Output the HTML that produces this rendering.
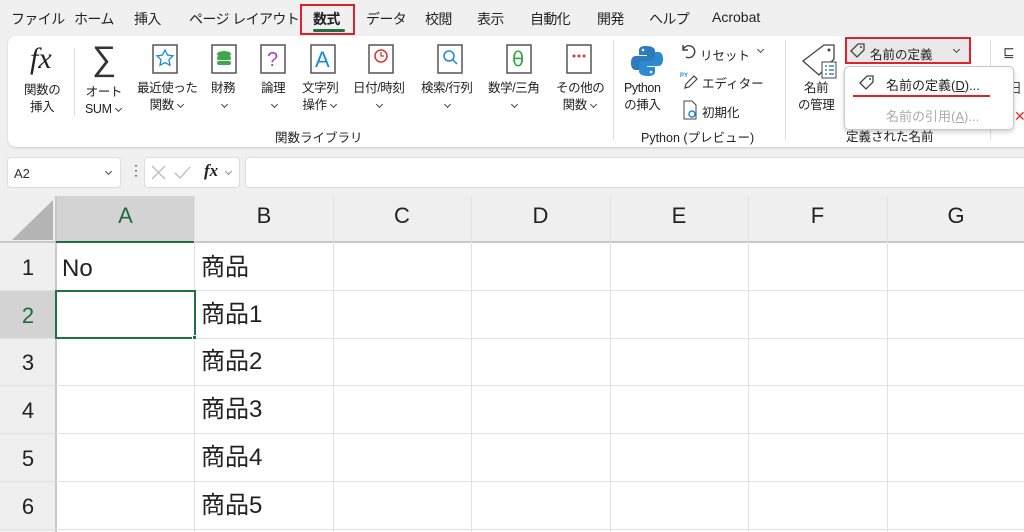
<!DOCTYPE html>
<html><head><meta charset="utf-8"><style>
*{margin:0;padding:0;box-sizing:border-box}
body{width:1024px;height:532px;overflow:hidden;background:#f0f0f0;font-family:"Liberation Sans","Noto Sans CJK JP",sans-serif;color:#222;position:relative}
.a{position:absolute;white-space:nowrap}
.tab{top:9px;font-size:14px;letter-spacing:-0.6px}
.lbl{font-size:12.5px;text-align:center;line-height:17px;letter-spacing:-0.4px}
.grid{position:absolute;background:#e1e1e1}
.hd{position:absolute;font-size:22px;color:#222;text-align:center}
.cell{position:absolute;font-size:24px;color:#222}
svg{position:absolute}
.cv{display:inline-block;width:5px;height:5px;border-right:1.3px solid #444;border-bottom:1.3px solid #444;transform:rotate(45deg);margin:0 2px 3px 4px;vertical-align:middle}
</style></head><body>
<!-- tabs -->
<div class="a tab" style="left:11px">ファイル</div>
<div class="a tab" style="left:74px">ホーム</div>
<div class="a tab" style="left:134px">挿入</div>
<div class="a tab" style="left:189px">ページ レイアウト</div>
<div class="a tab" style="left:313px;font-weight:bold">数式</div>
<div class="a" style="left:300px;top:4px;width:55px;height:31px;border:2px solid #e0202a"></div>
<div class="a" style="left:313px;top:29px;width:32px;height:3px;background:#1e7145;border-radius:2px"></div>
<div class="a tab" style="left:366px">データ</div>
<div class="a tab" style="left:425px">校閲</div>
<div class="a tab" style="left:477px">表示</div>
<div class="a tab" style="left:530px">自動化</div>
<div class="a tab" style="left:597px">開発</div>
<div class="a tab" style="left:649px">ヘルプ</div>
<div class="a tab" style="left:712px;letter-spacing:0">Acrobat</div>
<!-- ribbon -->
<div class="a" style="left:8px;top:36px;width:1030px;height:111px;background:#fff;border-radius:8px;box-shadow:0 1px 2px #ccc"></div>
<div class="a" style="left:30px;top:42px;font-family:'Liberation Serif',serif;font-style:italic;font-size:30px">fx</div>
<div class="a lbl" style="left:24px;top:82px">関数の<br>挿入</div>
<div class="a" style="left:74px;top:48px;width:1px;height:68px;background:#ddd"></div>
<div class="a" style="left:92px;top:40px;font-size:34px;color:#333">∑</div>
<div class="a lbl" style="left:85px;top:84px">オート<br>SUM<span class="cv"></span></div>
<svg style="left:152px;top:44px" width="26" height="32"><rect x="1" y="1" width="24" height="28" fill="#fff" stroke="#555" stroke-width="1.5"/><path d="M13 6l2.5 5 5.5.8-4 3.9 1 5.5-5-2.6-5 2.6 1-5.5-4-3.9 5.5-.8z" fill="none" stroke="#1a8ad4" stroke-width="1.3"/></svg>
<div class="a lbl" style="left:137px;top:80px">最近使った<br>関数<span class="cv"></span></div>
<svg style="left:211px;top:44px" width="26" height="32"><rect x="1" y="1" width="24" height="28" fill="#fff" stroke="#555" stroke-width="1.5"/><ellipse cx="13" cy="10" rx="7" ry="3" fill="#3ea64b"/><rect x="6" y="12" width="14" height="4" rx="2" fill="#3ea64b"/><rect x="6" y="17" width="14" height="4" rx="2" fill="#3ea64b"/></svg>
<div class="a lbl" style="left:211px;top:80px">財務<br><span class="cv"></span></div>
<svg style="left:260px;top:44px" width="26" height="32"><rect x="1" y="1" width="24" height="28" fill="#fff" stroke="#555" stroke-width="1.5"/><text x="7" y="22" font-size="20" fill="#b040c0" font-family="Liberation Sans">?</text></svg>
<div class="a lbl" style="left:261px;top:80px">論理<br><span class="cv"></span></div>
<svg style="left:310px;top:44px" width="26" height="32"><rect x="1" y="1" width="24" height="28" fill="#fff" stroke="#555" stroke-width="1.5"/><text x="5" y="23" font-size="22" fill="#1a8ad4" font-family="Liberation Sans">A</text></svg>
<div class="a lbl" style="left:302px;top:80px">文字列<br>操作<span class="cv"></span></div>
<svg style="left:368px;top:44px" width="26" height="32"><rect x="1" y="1" width="24" height="28" fill="#fff" stroke="#555" stroke-width="1.5"/><circle cx="13" cy="12" r="6" fill="none" stroke="#e03030" stroke-width="1.5"/><path d="M13 8v4h3" stroke="#e03030" fill="none" stroke-width="1.3"/></svg>
<div class="a lbl" style="left:353px;top:80px">日付/時刻<br><span class="cv"></span></div>
<svg style="left:437px;top:44px" width="26" height="32"><rect x="1" y="1" width="24" height="28" fill="#fff" stroke="#555" stroke-width="1.5"/><circle cx="12" cy="12" r="5" fill="none" stroke="#1a8ad4" stroke-width="1.5"/><path d="M16 16l4 4" stroke="#1a8ad4" stroke-width="1.5"/></svg>
<div class="a lbl" style="left:421px;top:80px">検索/行列<br><span class="cv"></span></div>
<svg style="left:506px;top:44px" width="26" height="32"><rect x="1" y="1" width="24" height="28" fill="#fff" stroke="#555" stroke-width="1.5"/><text x="6" y="22" font-size="20" fill="#3ea64b" font-family="DejaVu Sans">θ</text></svg>
<div class="a lbl" style="left:488px;top:80px">数学/三角<br><span class="cv"></span></div>
<svg style="left:566px;top:44px" width="26" height="32"><rect x="1" y="1" width="24" height="28" fill="#fff" stroke="#555" stroke-width="1.5"/><circle cx="8" cy="12" r="1.5" fill="#e03030"/><circle cx="13" cy="12" r="1.5" fill="#e03030"/><circle cx="18" cy="12" r="1.5" fill="#e03030"/></svg>
<div class="a lbl" style="left:556px;top:80px">その他の<br>関数<span class="cv"></span></div>
<div class="a" style="left:275px;top:127px;font-size:12.5px">関数ライブラリ</div>
<div class="a" style="left:613px;top:40px;width:1px;height:100px;background:#ddd"></div>
<svg style="left:630px;top:44px" width="34" height="34"><path d="M16 2c-7 0-7 3-7 5v4h8v1H6c-3 0-5 2-5 7s2 7 5 7h3v-4c0-3 2-5 5-5h7c2 0 4-2 4-4V7c0-3-3-5-9-5z" fill="#2b7bbd"/><path d="M18 32c7 0 7-3 7-5v-4h-8v-1h11c3 0 5-2 5-7s-2-7-5-7h-3v4c0 3-2 5-5 5h-7c-2 0-4 2-4 4v6c0 3 3 5 9 5z" fill="#2b8ad0"/><circle cx="13" cy="6" r="1.3" fill="#fff"/><circle cx="21" cy="28" r="1.3" fill="#fff"/></svg>
<div class="a lbl" style="left:624px;top:80px">Python<br>の挿入</div>
<svg style="left:679px;top:42px" width="18" height="18"><path d="M4 3v5h5M4 8a6 6 0 1 1 3 7" fill="none" stroke="#444" stroke-width="1.4"/></svg>
<div class="a" style="left:700px;top:45px;font-size:12.5px">リセット</div>
<div class="a" style="left:754px;top:42px"><span class="cv"></span></div>
<svg style="left:680px;top:71px" width="18" height="18"><text x="0" y="6" font-size="6" fill="#1a8ad4" font-family="Liberation Sans" font-weight="bold">PY</text><path d="M5 17l1-4 8-8 3 3-8 8z" fill="none" stroke="#444" stroke-width="1.2"/></svg>
<div class="a" style="left:702px;top:73px;font-size:12.5px">エディター</div>
<svg style="left:682px;top:100px" width="16" height="20"><path d="M2 1h8l4 4v14H2z" fill="none" stroke="#444"/><circle cx="10" cy="14" r="3" fill="none" stroke="#1a8ad4" stroke-width="1.5"/></svg>
<div class="a" style="left:702px;top:102px;font-size:12.5px">初期化</div>
<div class="a" style="left:641px;top:127px;font-size:12.5px">Python (プレビュー)</div>
<div class="a" style="left:785px;top:40px;width:1px;height:100px;background:#ddd"></div>
<svg style="left:800px;top:42px" width="38" height="38"><path d="M24 3h10v14L19 33 3 19z" fill="#fff" stroke="#444" stroke-width="1.3"/><circle cx="29" cy="8" r="1.5" fill="#444"/><rect x="22" y="20" width="14" height="16" fill="#fff" stroke="#444"/><path d="M25 24h2M29 24h5M25 28h2M29 28h5M25 32h2M29 32h5" stroke="#1a6ab0" stroke-width="1.3"/></svg>
<div class="a lbl" style="left:798px;top:80px">名前<br>の管理</div>
<div class="a" style="left:845px;top:37px;width:126px;height:27px;background:#e8e8e8;border:2px solid #e0202a"></div>
<svg style="left:849px;top:42px" width="18" height="16"><path d="M2 9l7-7h6v6l-7 7z" fill="none" stroke="#444" stroke-width="1.3"/><circle cx="12" cy="5" r="1" fill="#444"/></svg>
<div class="a" style="left:870px;top:44px;font-size:12.5px">名前の定義</div>
<div class="a" style="left:950px;top:42px"><span class="cv"></span></div>
<div class="a" style="left:846px;top:126px;font-size:12.5px">定義された名前</div>
<div class="a" style="left:990px;top:40px;width:1px;height:100px;background:#ddd"></div>
<div class="a" style="left:1003px;top:44px;font-size:14px;color:#444">⊑</div>
<div class="a" style="left:1008px;top:78px;font-size:14px;color:#444">日</div>
<div class="a" style="left:1014px;top:108px;font-size:14px;color:#e03030">✕</div>
<div class="a" style="left:844px;top:66px;width:170px;height:64px;background:#fff;border:1px solid #c8c8c8;border-radius:5px;box-shadow:0 2px 5px rgba(0,0,0,.2)"></div>
<svg style="left:858px;top:74px" width="18" height="16"><path d="M2 9l7-7h6v6l-7 7z" fill="none" stroke="#444" stroke-width="1.3"/><circle cx="12" cy="5" r="1" fill="#444"/></svg>
<div class="a" style="left:886px;top:75px;font-size:13px">名前の定義(<u>D</u>)...</div>
<div class="a" style="left:853px;top:95px;width:137px;height:2px;background:#e0202a"></div>
<div class="a" style="left:886px;top:106px;font-size:13px;color:#aaa">名前の引用(<u>A</u>)...</div>
<!-- formula bar -->
<div class="a" style="left:7px;top:157px;width:114px;height:31px;background:#fff;border:1px solid #ddd;border-radius:4px"></div>
<div class="a" style="left:14px;top:166px;font-size:13px;color:#333">A2</div>
<div class="a" style="left:102px;top:164px"><span class="cv"></span></div>
<div class="a" style="left:129px;top:162px;font-size:14px;color:#444">⋮</div>
<div class="a" style="left:144px;top:157px;width:96px;height:31px;background:#fff;border:1px solid #ddd;border-radius:4px"></div>
<svg style="left:150px;top:164px" width="70" height="18"><path d="M2 2l13 13M15 2L2 15" stroke="#bbb" stroke-width="1.3"/><path d="M25 9l5 5 10-11" stroke="#bbb" fill="none" stroke-width="1.3"/></svg>
<div class="a" style="left:204px;top:161px;font-family:'Liberation Serif',serif;font-style:italic;font-size:17px;font-weight:bold">fx</div>
<div class="a" style="left:222px;top:164px"><span class="cv" style="border-color:#888"></span></div>
<div class="a" style="left:245px;top:157px;width:785px;height:31px;background:#fff;border:1px solid #ddd;border-radius:4px"></div>
<!-- sheet -->
<div class="a" style="left:0;top:196px;width:1024px;height:336px;background:#fff"></div>
<div class="a" style="left:0;top:196px;width:1024px;height:46px;background:#efefef"></div>
<div class="a" style="left:0;top:196px;width:56px;height:336px;background:#efefef"></div>
<div class="a" style="left:56px;top:196px;width:139px;height:46px;background:#d3d3d3"></div>
<div class="a" style="left:0;top:290px;width:56px;height:48px;background:#d3d3d3"></div>
<svg style="left:12px;top:200px" width="42" height="40"><path d="M41 0V40H0z" fill="#b4b4b4"/></svg>
<div class="a" style="left:0;top:241px;width:1024px;height:2px;background:#c8c8c8"></div>
<div class="a" style="left:55px;top:196px;width:2px;height:336px;background:#c8c8c8"></div>
<div class="a" style="left:56px;top:241px;width:139px;height:2px;background:#1e7145"></div>
<div class="grid" style="left:194px;top:196px;width:1px;height:336px"></div>
<div class="grid" style="left:333px;top:196px;width:1px;height:336px"></div>
<div class="grid" style="left:471px;top:196px;width:1px;height:336px"></div>
<div class="grid" style="left:610px;top:196px;width:1px;height:336px"></div>
<div class="grid" style="left:748px;top:196px;width:1px;height:336px"></div>
<div class="grid" style="left:887px;top:196px;width:1px;height:336px"></div>
<div class="grid" style="left:0;top:290px;width:1024px;height:1px"></div>
<div class="grid" style="left:0;top:338px;width:1024px;height:1px"></div>
<div class="grid" style="left:0;top:385px;width:1024px;height:1px"></div>
<div class="grid" style="left:0;top:433px;width:1024px;height:1px"></div>
<div class="grid" style="left:0;top:481px;width:1024px;height:1px"></div>
<div class="grid" style="left:0;top:529px;width:1024px;height:1px"></div>
<div class="hd" style="left:56px;top:203px;width:139px;color:#1e6b40">A</div>
<div class="hd" style="left:195px;top:203px;width:138px">B</div>
<div class="hd" style="left:333px;top:203px;width:138px">C</div>
<div class="hd" style="left:471px;top:203px;width:139px">D</div>
<div class="hd" style="left:610px;top:203px;width:138px">E</div>
<div class="hd" style="left:748px;top:203px;width:139px">F</div>
<div class="hd" style="left:887px;top:203px;width:138px">G</div>
<div class="hd" style="left:0;top:255px;width:56px">1</div>
<div class="hd" style="left:0;top:303px;width:56px;color:#1e6b40">2</div>
<div class="hd" style="left:0;top:350px;width:56px">3</div>
<div class="hd" style="left:0;top:398px;width:56px">4</div>
<div class="hd" style="left:0;top:446px;width:56px">5</div>
<div class="hd" style="left:0;top:494px;width:56px">6</div>
<div class="cell" style="left:62px;top:255px">No</div>
<div class="cell" style="left:201px;top:247px">商品</div>
<div class="cell" style="left:201px;top:294px">商品1</div>
<div class="cell" style="left:201px;top:341px">商品2</div>
<div class="cell" style="left:201px;top:389px">商品3</div>
<div class="cell" style="left:201px;top:437px">商品4</div>
<div class="cell" style="left:201px;top:485px">商品5</div>
<div class="a" style="left:55px;top:290px;width:141px;height:49px;border:2px solid #1e7145"></div>
<div class="a" style="left:192px;top:335px;width:5px;height:5px;background:#1e7145;border:1px solid #fff"></div>
</body></html>
